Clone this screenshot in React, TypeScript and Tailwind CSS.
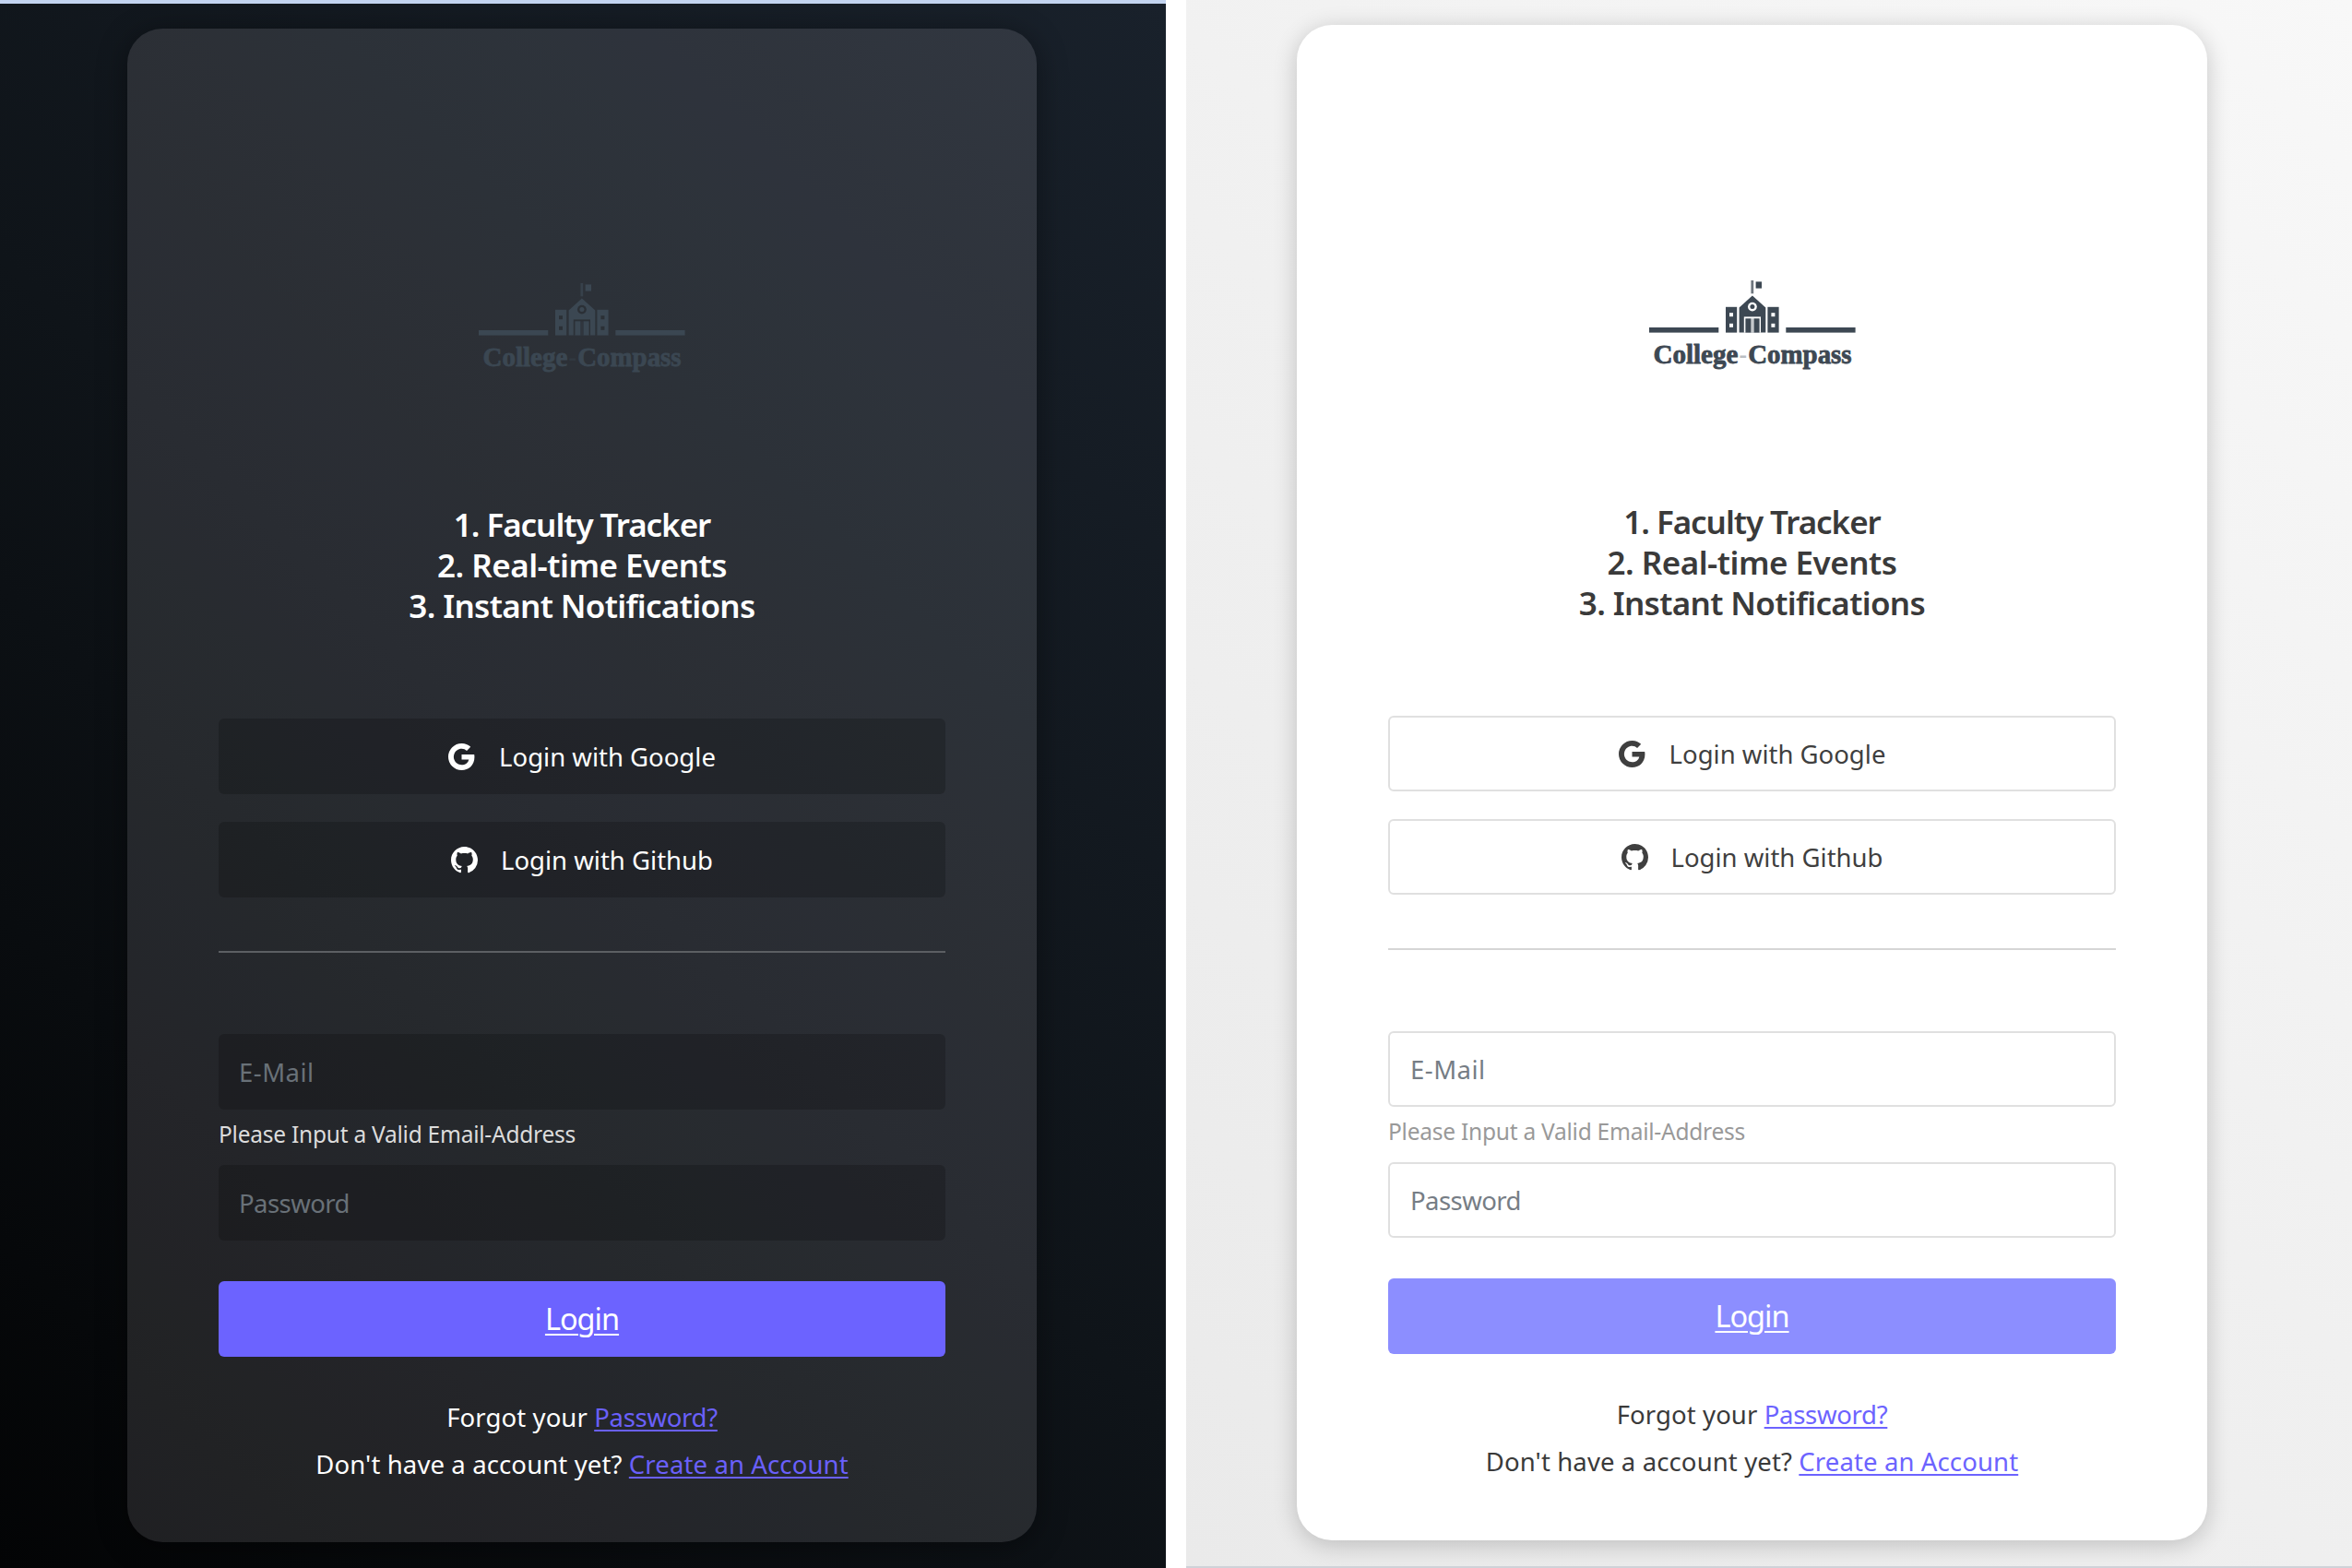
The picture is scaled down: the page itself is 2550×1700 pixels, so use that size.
import type { ReactNode } from "react";
import { BsGithub, BsGoogle } from "react-icons/bs";

type Theme = {
  panel: string;
  card: string;
  logo: string;
  logoHole: string;
  heading: string;
  field: string;
  fieldText: string;
  rule: string;
  placeholder: string;
  hint: string;
  login: string;
  footer: string;
  link: string;
};

const dark: Theme = {
  panel:
    "w-[1264px] border-t-4 border-[#c3d4f0] pt-[27px] bg-[linear-gradient(45deg,#030405_0%,#0f1419_48%,#19212b_100%)]",
  card: "h-[1641px] w-[986px] pt-[252px] bg-[#fffafc]/[0.11] shadow-[0_5px_32px_rgba(0,0,0,0.4)]",
  logo: "text-[#3b4752]",
  logoHole: "fill-[#2b3036]",
  heading: "mt-[124px] mb-[100px] font-semibold text-white",
  field: "bg-black/[0.19]",
  fieldText: "text-white",
  rule: "bg-[#5c5f63]",
  placeholder: "text-[#697178]",
  hint: "text-[#dcdcdc]",
  login: "bg-[#6c63ff]",
  footer: "text-white",
  link: "text-[#6a60fb]",
};

const light: Theme = {
  panel:
    "w-[1264px] border-b-2 border-[#cfd2d8] pt-[27px] bg-[linear-gradient(45deg,#eaeaea_0%,#f0f0f0_50%,#f8f8f8_100%)]",
  card: "h-[1643px] w-[987px] pt-[253px] bg-white shadow-[0_5px_26px_rgba(0,0,0,0.2)]",
  logo: "text-[#3d4853]",
  logoHole: "fill-white",
  heading: "mt-[124px] mb-[100px] font-semibold text-[#3a3a3a]",
  field: "border-2 border-[#e0e0e0] bg-white",
  fieldText: "text-[#3f3f3f]",
  rule: "bg-[#d6d6d6]",
  placeholder: "text-[#767d85]",
  hint: "text-[#999999]",
  login: "bg-[#8c8eff]",
  footer: "text-[#3a3a3a]",
  link: "text-[#6c63ff]",
};

function Logo({ t }: { t: Theme }) {
  return (
    <svg viewBox="0 0 260 140" className={`h-[140px] w-[260px] shrink-0 ${t.logo}`} fill="currentColor">
      {/* ground lines */}
      <rect x="18" y="75" width="75.3" height="5.6" />
      <rect x="166.3" y="75" width="75.3" height="5.6" />
      {/* flag */}
      <rect x="128.4" y="24" width="2.8" height="14.3" opacity="0.75" />
      <rect x="133.6" y="25.4" width="6.4" height="7.2" />
      {/* building */}
      <rect x="101" y="52.8" width="12.2" height="27.8" />
      <rect x="146.4" y="52.8" width="12.2" height="27.8" />
      <path d="M129.9 40.6 144.3 53.4V80.6H115.6V53.4Z" />
      <g className={t.logoHole}>
        <rect x="105" y="59.2" width="4" height="4" />
        <rect x="105" y="70.8" width="4" height="4" />
        <rect x="150.4" y="59.2" width="4" height="4" />
        <rect x="150.4" y="70.8" width="4" height="4" />
        <circle cx="129.9" cy="52.6" r="4.9" />
        <rect x="120.8" y="63.4" width="18.2" height="17.3" />
      </g>
      <circle cx="129.9" cy="52.6" r="2.5" />
      <rect x="122.4" y="65.3" width="6" height="15.3" />
      <rect x="131.6" y="65.3" width="6" height="15.3" />
      <rect x="128.4" y="65.3" width="3.2" height="15.3" opacity="0.3" />
      {/* wordmark */}
      <g className="font-['Liberation_Serif',serif] text-[30px] font-bold" stroke="currentColor" strokeWidth="0.8">
        <text x="22.4" y="114" textLength="92" lengthAdjust="spacingAndGlyphs">
          College
        </text>
        <text x="115.5" y="114" textLength="8.5" lengthAdjust="spacingAndGlyphs" opacity="0.35" strokeWidth="0">
          -
        </text>
        <text x="125.2" y="114" textLength="112.4" lengthAdjust="spacingAndGlyphs">
          Compass
        </text>
      </g>
    </svg>
  );
}

function Field({ t, className, children }: { t: Theme; className: string; children: ReactNode }) {
  return (
    <div className={`flex h-[82px] w-full shrink-0 items-center rounded-[6px] text-[27.5px] ${t.field} ${className}`}>
      {children}
    </div>
  );
}

function LoginCard({ t }: { t: Theme }) {
  return (
    <section className={`flex shrink-0 flex-col items-center rounded-[38px] px-[99px] ${t.card}`}>
      <Logo t={t} />
      <h1 className={`shrink-0 text-center text-[35px] leading-[44px] whitespace-nowrap ${t.heading}`}>
        <div className="tracking-[-1.05px]">1. Faculty Tracker</div>
        <div className="tracking-[-0.5px]">2. Real-time Events</div>
        <div className="tracking-[-0.67px]">3. Instant Notifications</div>
      </h1>

      <Field t={t} className={`justify-center gap-[26px] pt-px ${t.fieldText}`}>
        <BsGoogle className="size-[29px]" />
        <span>Login with Google</span>
      </Field>
      <Field t={t} className={`mt-[30px] justify-center gap-[25px] pt-px ${t.fieldText}`}>
        <BsGithub className="size-[29px]" />
        <span>Login with Github</span>
      </Field>

      <div className={`mt-[58px] mb-[88px] h-[2px] w-full shrink-0 ${t.rule}`} />

      <Field t={t} className={`pt-[2px] pl-[22px] tracking-[0.5px] ${t.placeholder}`}>
        E-Mail
      </Field>
      <div
        className={`flex h-[60px] w-full shrink-0 items-center pb-[6px] text-[24.5px] tracking-[-0.24px] ${t.hint}`}
      >
        Please Input a Valid Email-Address
      </div>
      <Field t={t} className={`pt-[2px] pl-[22px] tracking-[-0.55px] ${t.placeholder}`}>
        Password
      </Field>

      <button
        className={`mt-[44px] h-[82px] w-full shrink-0 rounded-[6px] text-[32.5px] tracking-[-1px] text-white underline decoration-2 underline-offset-[4px] ${t.login}`}
      >
        Login
      </button>

      <div className={`mt-[40px] shrink-0 text-center text-[27.5px] leading-[51px] whitespace-nowrap ${t.footer}`}>
        <p>
          <span className="tracking-[0.1px]">Forgot your </span>
          <a className={`tracking-[-0.3px] underline decoration-2 underline-offset-[3px] ${t.link}`}>Password?</a>
        </p>
        <p className="tracking-[0.12px]">
          Don't have a account yet?{" "}
          <a className={`underline decoration-2 underline-offset-[3px] ${t.link}`}>Create an Account</a>
        </p>
      </div>
    </section>
  );
}

export default function App() {
  return (
    <main className="flex h-[1700px] w-[2550px] justify-between overflow-hidden bg-white font-['Noto_Sans',sans-serif]">
      <div className={`flex items-start overflow-hidden pl-[138px] ${dark.panel}`}>
        <LoginCard t={dark} />
      </div>
      <div className={`flex items-start overflow-hidden pl-[120px] ${light.panel}`}>
        <LoginCard t={light} />
      </div>
    </main>
  );
}
